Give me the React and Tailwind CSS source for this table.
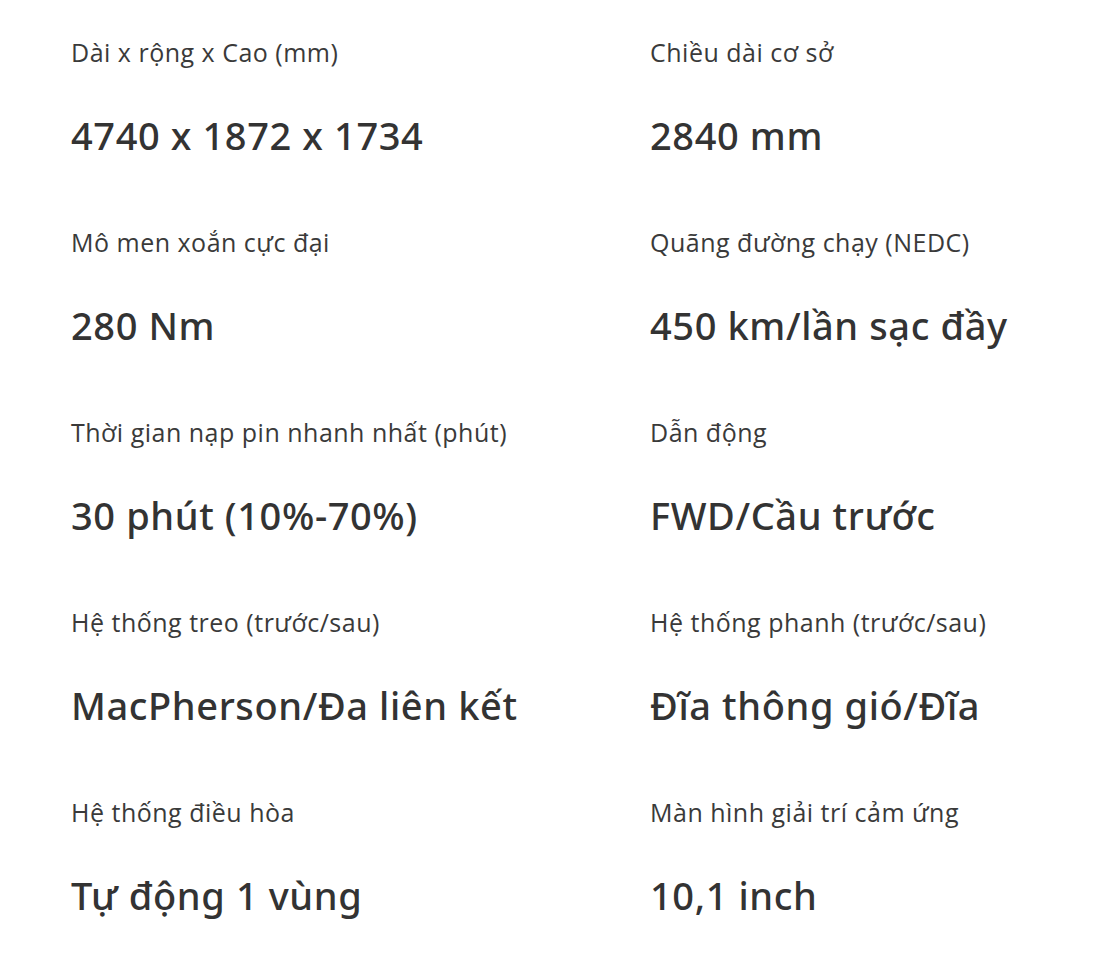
const specs = [
  ["Dài x rộng x Cao (mm)", "4740 x 1872 x 1734"],
  ["Chiều dài cơ sở", "2840 mm"],
  ["Mô men xoắn cực đại", "280 Nm"],
  ["Quãng đường chạy (NEDC)", "450 km/lần sạc đầy"],
  ["Thời gian nạp pin nhanh nhất (phút)", "30 phút (10%-70%)"],
  ["Dẫn động", "FWD/Cầu trước"],
  ["Hệ thống treo (trước/sau)", "MacPherson/Đa liên kết"],
  ["Hệ thống phanh (trước/sau)", "Đĩa thông gió/Đĩa"],
  ["Hệ thống điều hòa", "Tự động 1 vùng"],
  ["Màn hình giải trí cảm ứng", "10,1 inch"],
];

export default function App() {
  return (
    <div className="min-h-[958px] bg-white pl-[71px] pt-[36px] text-[#333] font-['Open_Sans','Liberation_Sans',sans-serif]">
      <div className="grid grid-cols-[579px_1fr] gap-y-[67px]">
        {specs.map(([label, value]) => (
          <div key={label} className="flex flex-col gap-[43px]">
            <p className="text-[25px] leading-[32px] tracking-[0.5px] text-[#3a3a3a]">{label}</p>
            <p className="text-[38px] leading-[48px] font-medium tracking-[0.6px] font-['Noto_Sans','Open_Sans',sans-serif]">{value}</p>
          </div>
        ))}
      </div>
    </div>
  );
}
